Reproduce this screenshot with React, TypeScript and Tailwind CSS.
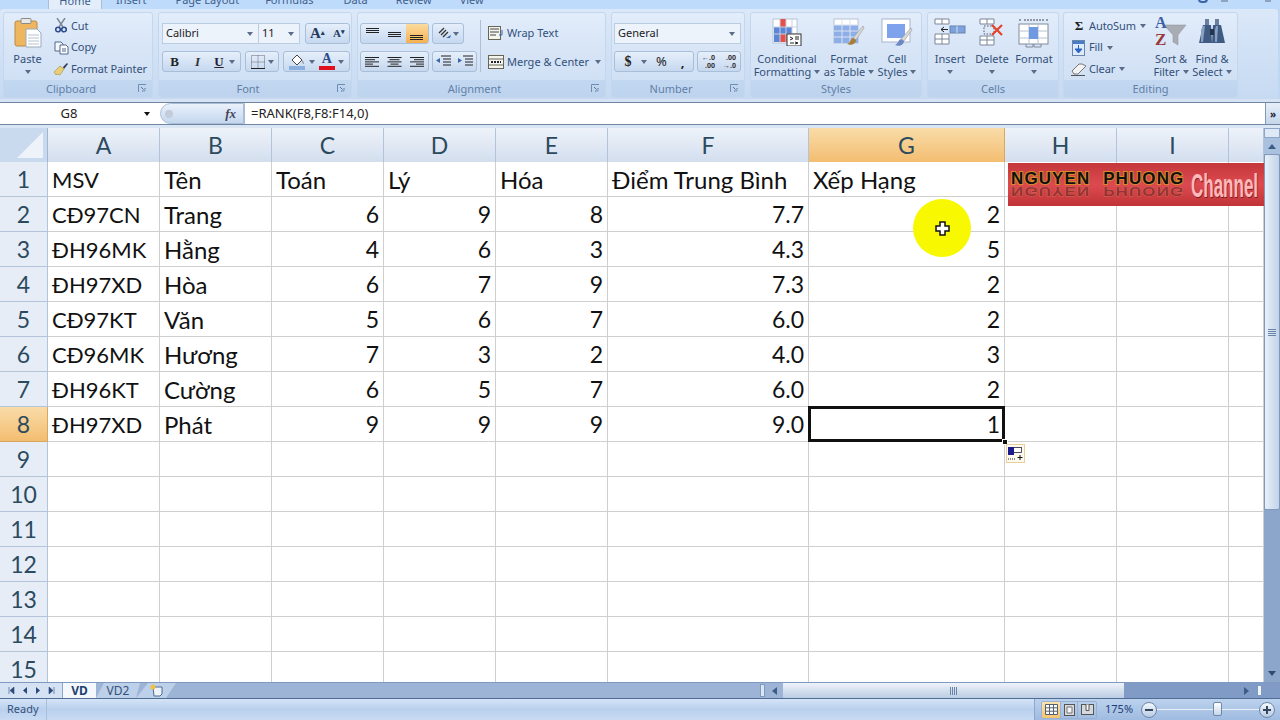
import React from "react";

const ui = "font-['Noto_Sans','Open_Sans',sans-serif]";

const Tri = ({ c = "#5a6c88" }: { c?: string }) => (
  <svg width="6" height="4" viewBox="0 0 6 4" className="shrink-0"><path d="M0 0h6L3 4z" fill={c} /></svg>
);

const Launcher = () => (
  <svg width="9" height="9" viewBox="0 0 9 9" className="shrink-0">
    <path d="M.5 8V.5H8" fill="none" stroke="#6f8db3" />
    <path d="M3 3l4 4M7 4v3H4" fill="none" stroke="#54749e" />
    <rect x="5" y="5" width="3.5" height="3.5" fill="#c3d6ee" opacity=".4" />
  </svg>
);

function Group({ className, label, launcher, children }: { className: string; label: string; launcher?: boolean; children: React.ReactNode }) {
  return (
    <div className={`${className} h-[86px] shrink-0 flex flex-col rounded-[3px] border border-[#c5d7ec] bg-gradient-to-b from-[#e2edfb] via-[#d6e4f6] to-[#cddef3] overflow-hidden`}>
      <div className="h-[67px] flex">{children}</div>
      <div className="h-[17px] pb-[1px] flex items-center bg-gradient-to-b from-[#c2d7f0] to-[#bed4ee] text-[11px] leading-none text-[#6180a8]">
        <span className="flex-1 text-center">{label}</span>
        {launcher && <span className="mr-[5px] flex"><Launcher /></span>}
      </div>
    </div>
  );
}

function Big({ className, l1, l2, arrow2, icon }: { className: string; l1: string; l2?: string; arrow2?: boolean; icon: React.ReactNode }) {
  return (
    <div className={`${className} shrink-0 flex flex-col items-center text-[11px] leading-[13px] text-[#33507a]`}>
      <div className="h-[39px] pt-[5px] flex items-start justify-center">{icon}</div>
      <span className="whitespace-nowrap h-[13px]">{l1}</span>
      {l2 ? (
        <span className="whitespace-nowrap h-[13px] flex items-center gap-[3px]">{l2}{arrow2 && <Tri />}</span>
      ) : (
        <span className="h-[13px] flex items-center"><Tri /></span>
      )}
    </div>
  );
}

const Small = ({ icon, text, arrow, w }: { icon: React.ReactNode; text: string; arrow?: boolean; w: string }) => (
  <div className={`${w} h-[22px] flex items-center text-[11px] tracking-[-0.1px] text-[#33507a] whitespace-nowrap`}>
    <span className="w-[18px] flex justify-center shrink-0">{icon}</span>
    <span className="ml-[1px]">{text}</span>
    {arrow && <span className="ml-[4px]"><Tri /></span>}
  </div>
);

const BtnRow = ({ className, children }: { className: string; children: React.ReactNode }) => (
  <div className={`${className} h-[21px] shrink-0 flex items-center rounded-[3px] border border-[#a9bfd8] bg-gradient-to-b from-[#e6effb] to-[#c6d8ef] overflow-hidden`}>{children}</div>
);

const Cmb = ({ className, text }: { className: string; text: string }) => (
  <div className={`${className} h-[21px] shrink-0 flex items-center justify-between px-[3px] border border-[#b9cce2] bg-[#edf3fb] text-[11px] text-[#222]`}>
    <span>{text}</span><span className="mr-[2px]"><Tri /></span>
  </div>
);

const Lines = ({ kind }: { kind: "l" | "c" | "r" }) => {
  const w = [14, 10, 14, 8, 14];
  return (
    <svg width="15" height="12" viewBox="0 0 15 12">
      {w.map((x, i) => {
        const x0 = kind === "l" ? 0 : kind === "r" ? 15 - x : (15 - x) / 2;
        return <path key={i} d={`M${x0} ${1.5 + i * 2.2}h${x}`} stroke="#222" strokeWidth="1" />;
      })}
    </svg>
  );
};

const VA = ({ y }: { y: number }) => (
  <svg width="15" height="14" viewBox="0 0 15 14">
    {[0, 2, 4].map((d) => <path key={d} d={`M1 ${y + d + .5}h13`} stroke="#222" />)}
  </svg>
);

const PasteIcon = () => (
  <svg width="28" height="30" viewBox="0 0 28 30">
    <rect x="1" y="3" width="22" height="25" rx="2" fill="#eeb75f" stroke="#b98a45" />
    <rect x="7" y="0.5" width="10" height="5" rx="1" fill="#e8e8e8" stroke="#8a8a8a" />
    <path d="M12 11h11l4 4v14H12z" fill="#fff" stroke="#9aa9bd" />
    <path d="M14 17h11M14 20h11M14 23h11M14 26h11" stroke="#b6c2d2" />
  </svg>
);
const Scissors = () => (
  <svg width="12" height="15" viewBox="0 0 12 15">
    <path d="M2 0l6 9M10 0L4 9" stroke="#7c8695" strokeWidth="1.4" />
    <circle cx="3" cy="11.5" r="2.3" fill="none" stroke="#2f4c8c" strokeWidth="1.6" />
    <circle cx="9" cy="11.5" r="2.3" fill="none" stroke="#2f4c8c" strokeWidth="1.6" />
  </svg>
);
const CopyIc = () => (
  <svg width="15" height="14" viewBox="0 0 15 14">
    <path d="M1 1h6l2 2v7H1z" fill="#f5f8fc" stroke="#51698d" />
    <path d="M6 4h6l2 2v7H6z" fill="#fff" stroke="#51698d" />
    <path d="M8 8h4M8 10h4" stroke="#51698d" />
  </svg>
);
const Brush = () => (
  <svg width="16" height="14" viewBox="0 0 16 14">
    <path d="M10 5l4-4 1 1-4 5z" fill="#2f3a55" />
    <path d="M1 10l6-6 4 3-4 6-3-1-1 1z" fill="#e9cf75" stroke="#aa8c3d" strokeWidth=".6" />
  </svg>
);
const FillBucket = () => (
  <svg width="17" height="17" viewBox="0 0 17 17">
    <path d="M3 7l5-5 5 5-5 5z" fill="#fff" stroke="#444" />
    <path d="M13 7c2 2 2 4 1.500 4S13 9 13 7z" fill="#777" />
    <rect x="0" y="13" width="16" height="4" fill="#8cb0de" />
  </svg>
);
const FontColor = () => (
  <span className="flex flex-col items-center font-['Liberation_Serif',serif] font-bold text-[14px] leading-[12px] text-[#2a4b88]">A<span className="w-[16px] h-[4px] bg-[#e0101e] mt-[1px]" /></span>
);
const CF = () => (
  <svg width="30" height="28" viewBox="0 0 30 28">
    <rect x="1" y="1" width="24" height="24" fill="#fff" stroke="#b8c4d4" />
    <rect x="8" y="1" width="6" height="8" fill="#e5504a" /><rect x="8" y="9" width="12" height="7" fill="#5e86d8" />
    <rect x="8" y="16" width="10" height="8" fill="#e5504a" /><rect x="2" y="9" width="6" height="15" fill="#5e86d8" />
    <path d="M8 1v24M14 1v24M20 1v24M1 9h24M1 16h24" stroke="#c7d1de" />
    <rect x="15" y="16" width="14" height="12" fill="#fff" stroke="#333" />
    <path d="M18 19l3 1.500-3 1.500M23 19h4M23 21h4M18 25h4M23 24l3 1-3 1" stroke="#222" fill="none" />
  </svg>
);
const FT = () => (
  <svg width="32" height="30" viewBox="0 0 32 30">
    <rect x="1" y="1" width="24" height="24" fill="#fff" stroke="#b8c4d4" />
    <rect x="1" y="7" width="24" height="18" fill="#8eaee8" />
    <path d="M9 1v24M17 1v24M1 7h24M1 13h24M1 19h24" stroke="#dbe3ef" />
    <path d="M30 8L20 20l3 2L31 10z" fill="#d8d8d8" stroke="#999" strokeWidth=".6" />
    <path d="M20 20c-3 1-2 5-6 6 4 2 9 0 9-4z" fill="#a97d36" />
  </svg>
);
const CS = () => (
  <svg width="32" height="30" viewBox="0 0 32 30">
    <rect x="1" y="1" width="28" height="23" fill="#fff" stroke="#a8b6c8" />
    <rect x="6" y="6" width="18" height="14" fill="#7ea2ec" />
    <path d="M30 10L20 21l3 2L31 12z" fill="#d8d8d8" stroke="#999" strokeWidth=".6" />
    <path d="M20 21c-3 1-2 4-6 6 4 2 9 0 9-4z" fill="#6c88c4" />
  </svg>
);
const InsertIc = () => (
  <svg width="32" height="28" viewBox="0 0 32 28">
    <path d="M1 1h14v5H1zM8 1v5M1 16h14v10H1zM8 16v10M1 21h14" fill="#fff" stroke="#7a8798" />
    <rect x="16" y="8" width="15" height="7" fill="#7ea2dc" stroke="#6784ad" /><path d="M23 8v7" stroke="#d4e0f0" />
    <path d="M14 11.500H7M10 9l-3 2.500 3 2.500" stroke="#222" fill="none" />
  </svg>
);
const DeleteIc = () => (
  <svg width="26" height="28" viewBox="0 0 26 28">
    <path d="M1 1h14v5H1zM8 1v5M1 18h14v9H1zM8 18v9M1 22h14" fill="#fff" stroke="#7a8798" />
    <rect x="5" y="8" width="10" height="8" fill="none" stroke="#556" strokeDasharray="1.500 1.500" />
    <path d="M13 7l10 10M23 7L13 17" stroke="#e4432d" strokeWidth="2.200" />
  </svg>
);
const FormatIc = () => (
  <svg width="32" height="30" viewBox="0 0 32 30">
    <path d="M1 2h3M28 2h3M6 2h20" stroke="#445" strokeDasharray="2 1" />
    <rect x="1" y="6" width="29" height="20" fill="#fff" stroke="#7f8b9c" />
    <path d="M1 13h29M1 20h29M11 6v20M20 6v20" stroke="#b7c2d0" />
    <rect x="11" y="9" width="9" height="12" fill="#6f99e2" />
    <path d="M8 26v3h7v-3M16 26v3h7v-3" fill="none" stroke="#7f8b9c" />
  </svg>
);
const FillIc = () => (
  <svg width="14" height="16" viewBox="0 0 14 16">
    <rect x=".5" y=".5" width="12" height="15" fill="#dfeafa" stroke="#6a86ad" />
    <rect x="1" y="1" width="11" height="3" fill="#4a7cc4" />
    <path d="M6.500 5v6M3 9l3.500 4L10 9z" stroke="#2a64c4" fill="#2a64c4" />
  </svg>
);
const ClearIc = () => (
  <svg width="16" height="14" viewBox="0 0 16 14">
    <path d="M1 9l7-7h3l4 2-8 8H3z" fill="#f3f3f3" stroke="#777" />
    <path d="M0 13.500h14" stroke="#555" />
  </svg>
);
const SortIc = () => (
  <div className="relative w-[32px] h-[30px]">
    <svg width="32" height="30" viewBox="0 0 32 30" className="absolute left-0 top-0">
      <path d="M9 7h22l-8 10v10l-5-3v-7z" fill="#a9acb2" stroke="#8e9298" strokeWidth=".5" />
    </svg>
    <span className="absolute left-0 top-[-3px] font-['Liberation_Serif',serif] font-bold text-[16px] leading-[16px] text-[#3c5ea8]">A</span>
    <span className="absolute left-0 top-[13px] font-['Liberation_Serif',serif] font-bold text-[17px] leading-[17px] text-[#9b3a3a]">Z</span>
  </div>
);
const Binoc = () => (
  <svg width="28" height="26" viewBox="0 0 28 26">
    <path d="M7 1h4v6H7zM17 1h4v6h-4z" fill="#6a7f9f" />
    <path d="M5 7h8l1 18H1z" fill="#3f5b84" /><path d="M15 7h8l4 18H14z" fill="#3f5b84" />
    <path d="M12 11h4v6h-4z" fill="#26344c" /><path d="M3 12l2-4h2l-2 16H3z" fill="#8aa0c0" /><path d="M17 12l1-4h2l-1 16h-2z" fill="#8aa0c0" />
  </svg>
);

const cols = ["A", "B", "C", "D", "E", "F", "G", "H", "I", ""];
const data: [string, string, string, string, string, string, string][] = [
  ["MSV", "Tên", "Toán", "Lý", "Hóa", "Điểm Trung Bình", "Xếp Hạng"],
  ["CĐ97CN", "Trang", "6", "9", "8", "7.7", "2"],
  ["ĐH96MK", "Hằng", "4", "6", "3", "4.3", "5"],
  ["ĐH97XD", "Hòa", "6", "7", "9", "7.3", "2"],
  ["CĐ97KT", "Văn", "5", "6", "7", "6.0", "2"],
  ["CĐ96MK", "Hương", "7", "3", "2", "4.0", "3"],
  ["ĐH96KT", "Cường", "6", "5", "7", "6.0", "2"],
  ["ĐH97XD", "Phát", "9", "9", "9", "9.0", "1"],
];

const GRID = "grid grid-cols-[48px_112px_112px_112px_112px_112px_201px_196px_112px_112px_35px] grid-rows-[1fr]";

function sizeFor(r: number, c: number) {
  if (c === 0) return "text-[22px]";
  if (r === 0 || c === 1) return "text-[24px]";
  return "text-[23px]";
}

export default function App() {
  const rows = Array.from({ length: 15 }, (_, i) => i);
  return (
    <div className={`${ui} w-[1280px] h-[720px] overflow-hidden flex flex-col bg-[#bfd7f3] relative`}>
      {/* tabs */}
      <div className="h-[9px] shrink-0 flex bg-[#bfdbfb] text-[11px] leading-none text-[#3f5f8c] relative overflow-hidden">
        <div className="ml-[48px] w-[54px] h-[9px] bg-[#e4eefb] border-x border-[#a6bfdc] flex justify-center items-end"><span className="mb-[3px]">Home</span></div>
        <span className="ml-[14px] mt-[-6px]">Insert</span>
        <span className="ml-[29px] mt-[-6px]">Page Layout</span>
        <span className="ml-[26px] mt-[-6px]">Formulas</span>
        <span className="ml-[30px] mt-[-6px]">Data</span>
        <span className="ml-[28px] mt-[-6px]">Review</span>
        <span className="ml-[28px] mt-[-6px]">View</span>
        <span className="ml-auto w-[10px] h-[4px] mt-[-1px] rounded-b-full border-2 border-t-0 border-[#3a65a8]" />
        <span className="ml-[13px] w-[7px] h-[2px] bg-[#8ea3bd]" />
        <span className="ml-[37px] mr-[9px] w-[6px] h-[2px] bg-[#8ea3bd]" />
      </div>
      {/* ribbon */}
      <div className="h-[90px] shrink-0 flex gap-[5px] px-[3px] pt-[3px] bg-gradient-to-b from-[#dbe8f9] to-[#c6daf2] rounded-[3px] mr-[2px]">
        <Group className="w-[150px]" label="Clipboard" launcher>
          <Big className="w-[47px]" l1="Paste" icon={<PasteIcon />} />
          <div className="flex flex-col pt-[2px] ml-[1px]">
            <Small w="w-[95px]" icon={<Scissors />} text="Cut" />
            <Small w="w-[95px]" icon={<CopyIc />} text="Copy" />
            <Small w="w-[95px]" icon={<Brush />} text="Format Painter" />
          </div>
        </Group>
        <Group className="w-[194px]" label="Font" launcher>
          <div className="pl-[3px] pt-[10px] flex flex-col gap-[7px]">
            <div className="flex">
              <Cmb className="w-[97px]" text="Calibri" />
              <Cmb className="w-[42px] ml-[-1px]" text="11" />
              <BtnRow className="w-[45px] ml-[5px] justify-around font-['Liberation_Serif',serif] font-bold text-[#253a5e]">
                <span className="text-[15px] leading-none">A<sup className="text-[7px]">▴</sup></span>
                <span className="text-[11px] leading-none">A<sup className="text-[7px]">▾</sup></span>
              </BtnRow>
            </div>
            <div className="flex">
              <BtnRow className="w-[79px] font-['Liberation_Serif',serif] text-[13px] text-[#222]">
                <span className="w-[23px] text-center font-bold">B</span>
                <span className="w-[23px] text-center italic font-bold text-[#333]">I</span>
                <span className="w-[20px] text-center underline font-bold text-[#223]">U</span>
                <Tri />
              </BtnRow>
              <BtnRow className="w-[34px] ml-[4px] justify-around px-[3px]">
                <svg width="14" height="14" viewBox="0 0 14 14"><path d="M.5.5h13v13H.5zM7 .5v13M.5 7h13" fill="none" stroke="#667" strokeDasharray="1 1" /><path d="M0 13.500h14" stroke="#222" /></svg>
                <Tri />
              </BtnRow>
              <BtnRow className="w-[67px] ml-[4px] justify-around px-[3px]">
                <FillBucket /><Tri /><FontColor /><Tri />
              </BtnRow>
            </div>
          </div>
        </Group>
        <Group className="w-[249px]" label="Alignment" launcher>
          <div className="pl-[2px] pt-[10px] flex flex-col gap-[7px] w-[122px]">
            <div className="flex">
              <BtnRow className="w-[69px]">
                <span className="w-[23px] flex justify-center"><VA y={1} /></span>
                <span className="w-[23px] flex justify-center"><VA y={5} /></span>
                <span className="w-[23px] h-full flex justify-center items-center bg-gradient-to-b from-[#fbdc9c] to-[#f5b04e]"><VA y={8} /></span>
              </BtnRow>
              <BtnRow className="w-[32px] ml-[3px] justify-center gap-[1px]">
                <svg width="15" height="14" viewBox="0 0 15 14"><path d="M2 6l5-5M4 8l5-5M6 10l5-5" stroke="#333" strokeWidth="1.300" /><path d="M9 11l5-3-1 3z" fill="#3a66aa" /></svg>
                <Tri />
              </BtnRow>
            </div>
            <div className="flex">
              <BtnRow className="w-[69px]">
                <span className="w-[23px] flex justify-center"><Lines kind="l" /></span>
                <span className="w-[23px] flex justify-center"><Lines kind="c" /></span>
                <span className="w-[23px] flex justify-center"><Lines kind="r" /></span>
              </BtnRow>
              <BtnRow className="w-[45px] ml-[3px] justify-around">
                <svg width="15" height="13" viewBox="0 0 15 13"><path d="M5 1h10M7 4h8M7 7h8M7 10h8" stroke="#222" /><path d="M0 5.500L4 3v5z" fill="#3a66aa" /></svg>
                <svg width="15" height="13" viewBox="0 0 15 13"><path d="M5 1h10M7 4h8M7 7h8M7 10h8" stroke="#222" /><path d="M4 5.500L0 3v5z" fill="#3a66aa" /></svg>
              </BtnRow>
            </div>
          </div>
          <div className="w-px h-[52px] mt-[7px] bg-[#aebfd6]" />
          <div className="pl-[7px] pt-[9px] flex flex-col gap-[7px]">
            <div className="h-[22px] flex items-center text-[11px] text-[#33507a] gap-[3px]">
              <svg width="16" height="14" viewBox="0 0 16 14"><rect x=".5" y=".5" width="12" height="13" fill="#f5f5f0" stroke="#665" /><path d="M2 3h9M2 6h9M2 9h6" stroke="#444" /><path d="M14 4v5h-3" fill="none" stroke="#3a66aa" /></svg>
              <span>Wrap Text</span>
            </div>
            <div className="h-[22px] flex items-center text-[11px] text-[#33507a] gap-[3px]">
              <svg width="16" height="14" viewBox="0 0 16 14"><rect x=".5" y=".5" width="15" height="13" fill="#f5f5f0" stroke="#665" /><path d="M.5 4h15M.5 10h15" stroke="#665" /><path d="M3 7h10" stroke="#223" strokeWidth="2" strokeDasharray="2 1" /></svg>
              <span>Merge &amp; Center</span>
              <span className="ml-[3px]"><Tri /></span>
            </div>
          </div>
        </Group>
        <Group className="w-[134px]" label="Number" launcher>
          <div className="pl-[2px] pt-[10px] flex flex-col gap-[7px]">
            <Cmb className="w-[127px]" text="General" />
            <div className="flex">
              <BtnRow className="w-[80px] text-[#222]">
                <span className="w-[26px] text-center font-['Liberation_Serif',serif] font-bold text-[14px]">$</span>
                <Tri />
                <span className="w-[29px] text-center text-[13px]">%</span>
                <span className="w-[13px] text-center font-bold text-[13px] leading-[8px]">,</span>
              </BtnRow>
              <BtnRow className="w-[44px] ml-[3px] justify-around text-[7px] leading-[8px] font-bold text-[#333]">
                <span className="text-right">←.0<br />.00</span>
                <span className="text-right">.00<br />→.0</span>
              </BtnRow>
            </div>
          </div>
        </Group>
        <Group className="w-[172px]" label="Styles">
          <Big className="w-[72px]" l1="Conditional" l2="Formatting" arrow2 icon={<CF />} />
          <Big className="w-[52px]" l1="Format" l2="as Table" arrow2 icon={<FT />} />
          <Big className="w-[44px]" l1="Cell" l2="Styles" arrow2 icon={<CS />} />
        </Group>
        <Group className="w-[132px]" label="Cells">
          <Big className="w-[44px]" l1="Insert" icon={<InsertIc />} />
          <Big className="w-[40px]" l1="Delete" icon={<DeleteIc />} />
          <Big className="w-[44px]" l1="Format" icon={<FormatIc />} />
        </Group>
        <Group className="w-[175px] ml-[-1px]" label="Editing">
          <div className="flex flex-col pt-[2px] pl-[6px] w-[87px]">
            <Small w="w-[80px]" icon={<span className="font-['Liberation_Serif',serif] font-bold text-[13px] text-[#222]">Σ</span>} text="AutoSum" arrow />
            <Small w="w-[80px]" icon={<FillIc />} text="Fill" arrow />
            <Small w="w-[80px]" icon={<ClearIc />} text="Clear" arrow />
          </div>
          <Big className="w-[40px]" l1="Sort &" l2="Filter" arrow2 icon={<SortIc />} />
          <Big className="w-[42px]" l1="Find &" l2="Select" arrow2 icon={<Binoc />} />
        </Group>
      </div>
      <div className="h-[3px] shrink-0 bg-[#d5e3f5]" />
      {/* formula bar */}
      <div className="h-[23px] shrink-0 flex bg-white border-y border-[#6f87a3] text-[13px] text-[#222]">
        <div className="w-[152px] flex items-center justify-center relative">
          <span className="mr-[14px]">G8</span>
          <span className="absolute right-[2px]"><Tri c="#111" /></span>
        </div>
        <div className="w-[84px] ml-[8px] flex items-center justify-between pl-[4px] pr-[7px] rounded-l-full bg-gradient-to-b from-[#eaf1fb] to-[#c4d7ee] border border-[#a9bdd6]">
          <span className="w-[8px] h-[8px] rounded-full bg-[#c3cdd9]" />
          <span className="font-['Liberation_Serif',serif] italic font-bold text-[13px] text-[#445]">fx</span>
        </div>
        <div className="flex-1 pl-[6px] flex items-center border-l border-[#a9bdd6]">=RANK(F8,F8:F14,0)</div>
        <div className="w-[15px] flex items-center justify-center bg-gradient-to-b from-[#e7eff9] to-[#c5d6ea] border-l border-[#8199b6] text-[10px] font-bold leading-none text-[#223]">»</div>
      </div>
      <div className="h-[3px] shrink-0 bg-[#dbe6f4]" />
      {/* sheet */}
      <div className="h-[554px] shrink-0 flex overflow-hidden bg-white relative">
        <div className="w-[1264px] shrink-0 font-['Lato','Noto_Sans',sans-serif] text-[23px] leading-none text-[#111]">
          <div className={`${GRID} h-[34px] border-b border-[#9fb6d2]`}>
            <div className="bg-[#c9d9ee] border-r border-[#9fb6d2] flex items-end justify-end p-[3px]">
              <svg width="28" height="28" viewBox="0 0 28 28"><path d="M27 1v26H1z" fill="#eef3fa" /></svg>
            </div>
            {cols.map((c, i) => (
              <div key={i} className={`flex items-center justify-center border-r text-[#2b4a5e] ${c === "G" ? "bg-gradient-to-b from-[#f9dca8] to-[#f3bd70] border-[#d8a860]" : "bg-gradient-to-b from-[#eef3fa] to-[#d3deee] border-[#b3c4da]"}`}>{c}</div>
            ))}
          </div>
          {rows.map((r) => {
            const d = data[r];
            return (
              <div key={r} className={`${GRID} h-[35px]`}>
                <div className={`flex items-center justify-center pt-[1px] border-r border-b text-[#2b4a5e] ${r === 7 ? "bg-gradient-to-b from-[#f9dca8] to-[#f3bd70] border-[#d8a860]" : "bg-[#e6edf7] border-[#b3c4da]"}`}>{r + 1}</div>
                {Array.from({ length: 10 }, (_, c) => {
                  const v = d && c < 7 ? d[c] : "";
                  const right = r > 0 && c >= 2;
                  return (
                    <div key={c} className={`flex items-center pt-[1px] border-r border-b border-[#cfcfcf] px-[4px] whitespace-nowrap ${sizeFor(r, c)} ${right ? "justify-end" : ""}`}>{v}</div>
                  );
                })}
              </div>
            );
          })}
        </div>
        {/* vertical scrollbar */}
        <div className="w-[16px] shrink-0 flex flex-col items-center bg-[#8ca6cb]">
          <div className="w-full h-[10px] bg-[#dfe9f6] border border-[#8ca6cb]" />
          <div className="w-full h-[16px] flex items-center justify-center bg-[#a9c0de]"><svg width="8" height="5" viewBox="0 0 8 5"><path d="M0 5h8L4 0z" fill="#3e5c88" /></svg></div>
          <div className="w-full h-[356px] flex items-center justify-center bg-gradient-to-r from-[#e9f0f9] to-[#c2d3e9] border border-[#8199b9] rounded-[2px]">
            <span className="w-[8px] h-[8px] bg-[repeating-linear-gradient(0deg,#6a84a8_0_1px,transparent_1px_2px)]" />
          </div>
          <div className="flex-1" />
          <div className="h-[18px] flex items-center"><svg width="8" height="5" viewBox="0 0 8 5"><path d="M0 0h8L4 5z" fill="#2f4a74" /></svg></div>
        </div>

        {/* banner lying over the cells */}
        <div className="absolute left-[1008px] top-[35px] w-[256px] h-[43px] flex items-center bg-gradient-to-b from-[#c4373b] via-[#dc4a50] to-[#c13337] overflow-hidden">
          <div className="w-[180px] shrink-0 ml-[3px] flex flex-col font-['Liberation_Sans',sans-serif] font-bold text-[17px] leading-[13px] tracking-[1.1px] [word-spacing:7px] whitespace-nowrap">
            <span className="text-[#111] [paint-order:stroke_fill] [-webkit-text-stroke:2px_#d98a2a]">NGUYEN PHUONG</span>
            <span className="text-[#3a1d1d] opacity-40 scale-y-[-0.75] [paint-order:stroke_fill] [-webkit-text-stroke:1px_#e0a060]">NGUYEN PHUONG</span>
          </div>
          <span className="shrink-0 font-['Liberation_Sans',sans-serif] font-bold text-[34px] leading-none scale-x-[0.5] origin-left text-[#ffb9b9] [text-shadow:1px_1px_0_#7a1f22] whitespace-nowrap">Channel</span>
        </div>
        {/* selection */}
        <div className="absolute left-[808px] top-[278px] w-[197px] h-[36px] border-[3px] border-[#111]" />
        <div className="absolute left-[1002px] top-[311px] w-[6px] h-[6px] bg-[#111] border border-white" />
        <div className="absolute left-[1006px] top-[316px] w-[19px] h-[19px] bg-[#fdf9ee] border border-[#e8cf9a] flex items-center justify-center">
          <svg width="15" height="14" viewBox="0 0 15 14">
            <rect x="0.4" y="0.4" width="13" height="5" fill="#fff" stroke="#223" strokeWidth=".8" />
            <rect x="0" y="0" width="6" height="8" fill="#1a1a8c" />
            <path d="M0 12h8" stroke="#223" strokeDasharray="1 1" /><path d="M12 8v5M9.500 10.500h5" stroke="#111" />
          </svg>
        </div>
        {/* cursor highlight */}
        <div className="absolute left-[913px] top-[71px] w-[58px] h-[58px] rounded-full bg-[#f8f800] flex items-center justify-center">
          <svg width="15" height="15" viewBox="0 0 15 15"><path d="M5 1h5v4h4v5h-4v4H5v-4H1V5h4z" fill="#fff" stroke="#111" strokeWidth="1.500" /></svg>
        </div>
      </div>
      {/* sheet tabs + horizontal scrollbar */}
      <div className="h-[17px] shrink-0 flex bg-[#9db4d6] border-t border-b border-t-[#7f9ac0] border-b-[#4e6c94] text-[12px]">
        <div className="w-[63px] flex items-center justify-around px-[3px] bg-[#d5e2f3] border-r border-[#8ca6c8]">
          {["M4 0v7M9 0L5 3.500 9 7z", "M8 0L4 3.500 8 7z", "M3 0l4 3.500L3 7z", "M2 0l4 3.500L2 7zM7 0v7"].map((d, i) => (
            <svg key={i} width="10" height="7" viewBox="0 0 10 7"><path d={d} fill="#2c4a78" stroke={d.includes("v7") ? "#2c4a78" : "none"} strokeWidth=".6" /></svg>
          ))}
        </div>
        <div className="w-[33px] flex items-center justify-center bg-[#f4f8fd] font-bold text-[#1f3f6f]">VD</div>
        <div className="w-[44px] flex items-center justify-center bg-[#bdd0e9] text-[#33507a] [clip-path:polygon(8px_0,100%_0,calc(100%-4px)_100%,0_100%)]">VD2</div>
        <div className="w-[40px] ml-[-4px] flex items-center justify-center bg-[#bdd0e9] [clip-path:polygon(12px_0,100%_0,calc(100%-10px)_100%,0_100%)]">
          <svg width="14" height="13" viewBox="0 0 14 13"><path d="M4 3h9v7l-2 2H5z" fill="#eef3fa" stroke="#4f6a90" /><circle cx="4" cy="3" r="2.500" fill="#f0c040" /></svg>
        </div>
        <div className="w-[584px] shrink-0" />
        <div className="w-[5px] shrink-0 my-[1px] bg-[#dbe6f4] border border-[#7f9ac0]" />
        <div className="w-[18px] shrink-0 flex items-center justify-center"><svg width="5" height="8" viewBox="0 0 5 8"><path d="M5 0v8L0 4z" fill="#3e5c88" /></svg></div>
        <div className="w-[341px] shrink-0 flex items-center justify-center bg-gradient-to-b from-[#eef3fa] to-[#bccde3]">
          <span className="w-[8px] h-[8px] bg-[repeating-linear-gradient(90deg,#6a84a8_0_1px,transparent_1px_2px)]" />
        </div>
        <div className="flex-1 bg-[#7f9bc6] flex items-center justify-end">
          <svg width="5" height="8" viewBox="0 0 5 8"><path d="M0 0v8l5-4z" fill="#3e5c88" /></svg>
          <span className="ml-[8px] mr-[18px] w-[5px] h-[11px] bg-[#eef3fa] border border-[#7f9ac0]" />
        </div>
      </div>
      {/* status bar */}
      <div className="flex-1 flex items-center bg-gradient-to-b from-[#d5e4f7] via-[#b9d0ee] to-[#c9dbf3] text-[11px] text-[#33507a]">
        <span className="w-[47px] h-full flex items-center pl-[7px] border-r border-[#a9bfdb]">Ready</span>
        <div className="ml-auto h-full w-[246px] flex items-center border-l border-[#8ea8ca] bg-gradient-to-b from-[#bcd2ee] to-[#9fbbe0]">
          <div className="ml-[6px] flex items-center h-[18px] w-[56px] rounded-[2px] border border-[#9ab2d2] overflow-hidden">
            <span className="w-[18px] h-full flex items-center justify-center bg-gradient-to-b from-[#fbe4ad] to-[#f6c46e]">
              <svg width="13" height="11" viewBox="0 0 13 11"><path d="M.5.5h12v10H.5zM.5 3.800h12M.5 7.200h12M4.500.5v10M8.500.5v10" fill="#fff" stroke="#54606e" /></svg>
            </span>
            <span className="w-[18px] h-full flex items-center justify-center border-x border-[#9ab2d2]">
              <svg width="11" height="12" viewBox="0 0 11 12"><rect x=".5" y=".5" width="10" height="11" fill="#d5d8dc" stroke="#555" /><path d="M3 3h5v6H3z" fill="#f5f5f5" stroke="#777" /></svg>
            </span>
            <span className="flex-1 h-full flex items-center justify-center">
              <svg width="13" height="11" viewBox="0 0 13 11"><rect x=".5" y=".5" width="12" height="10" fill="#d5d8dc" stroke="#555" /><path d="M5 .5v6h3v-6" fill="#f5f5f5" stroke="#555" /></svg>
            </span>
          </div>
          <span className="ml-[8px] w-[28px] text-[#1f3f78] text-[11px] whitespace-nowrap">175%</span>
          <span className="ml-[8px] w-[16px] h-[16px] rounded-full border border-[#6f87a8] bg-gradient-to-b from-[#f4f8fd] to-[#b9cbe2] flex items-center justify-center"><span className="w-[8px] h-[2px] bg-[#33475f]" /></span>
          <div className="relative w-[102px] h-px bg-[#e8f0fa]">
            <span className="absolute left-[56px] top-[-7px] w-[9px] h-[14px] bg-gradient-to-b from-[#fff] to-[#c6d6ea] border border-[#6f87a8] rounded-[2px]" />
          </div>
          <span className="w-[16px] h-[16px] rounded-full border border-[#6f87a8] bg-gradient-to-b from-[#f4f8fd] to-[#b9cbe2] relative flex items-center justify-center"><span className="w-[8px] h-[2px] bg-[#33475f]" /><span className="absolute w-[2px] h-[8px] bg-[#33475f]" /></span>
        </div>
      </div>
    </div>
  );
}
